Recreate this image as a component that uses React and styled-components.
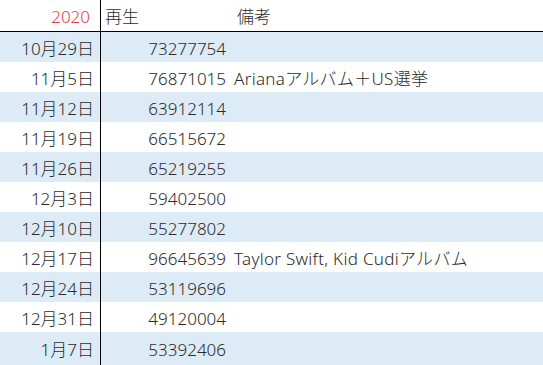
import React from 'react'
import styled, { createGlobalStyle } from 'styled-components'

const GlobalStyle = createGlobalStyle`
  html, body {
    margin: 0;
    padding: 0;
    background: #fff;
  }
  body {
    font-family: "Noto Sans", "Noto Sans CJK JP", sans-serif;
    font-weight: 300;
    color: #2b2b2b;
  }
`

const Sheet = styled.div`
  width: 543px;
  height: 365px;
  display: flex;
  flex-direction: column;
  overflow: hidden;
`

const Row = styled.div`
  display: grid;
  grid-template-columns: 101px 132px 1fr;
  height: ${p => (p.$header ? '31px' : '30px')};
  flex: ${p => (p.$last ? '1' : 'none')};
  background: ${p => (p.$shaded ? '#ddebf7' : '#fff')};
  border-bottom: ${p => (p.$header ? '1px solid #000' : 'none')};
  font-size: 17px;
  line-height: 1;
`

const DateCell = styled.div`
  display: flex;
  align-items: center;
  justify-content: flex-end;
  padding-top: 2px;
  padding-right: ${p => (p.$red ? '10px' : '6px')};
  border-right: 1px solid #000;
  color: ${p => (p.$red ? '#e0403c' : 'inherit')};
  white-space: nowrap;
`

const NumCell = styled.div`
  display: flex;
  align-items: center;
  justify-content: ${p => (p.$header ? 'flex-start' : 'flex-end')};
  padding: 2px 7px 0 4px;
  white-space: nowrap;
`

const NoteCell = styled.div`
  display: flex;
  align-items: center;
  padding: 2px 0 0 ${p => (p.$header ? '4px' : '1px')};
  letter-spacing: ${p => (p.$header ? '0' : '0.3px')};
  white-space: nowrap;
`

const rows = [
  ['10月29日', '73277754', ''],
  ['11月5日', '76871015', 'Arianaアルバム＋US選挙'],
  ['11月12日', '63912114', ''],
  ['11月19日', '66515672', ''],
  ['11月26日', '65219255', ''],
  ['12月3日', '59402500', ''],
  ['12月10日', '55277802', ''],
  ['12月17日', '96645639', 'Taylor Swift, Kid Cudiアルバム'],
  ['12月24日', '53119696', ''],
  ['12月31日', '49120004', ''],
  ['1月7日', '53392406', ''],
]

export default function App() {
  return (
    <>
      <GlobalStyle />
      <Sheet>
        <Row $header>
          <DateCell $red>2020</DateCell>
          <NumCell $header>再生</NumCell>
          <NoteCell $header>備考</NoteCell>
        </Row>
        {rows.map(([date, plays, note], i) => (
          <Row key={date} $shaded={i % 2 === 0} $last={i === rows.length - 1}>
            <DateCell>{date}</DateCell>
            <NumCell>{plays}</NumCell>
            <NoteCell>{note}</NoteCell>
          </Row>
        ))}
      </Sheet>
    </>
  )
}
